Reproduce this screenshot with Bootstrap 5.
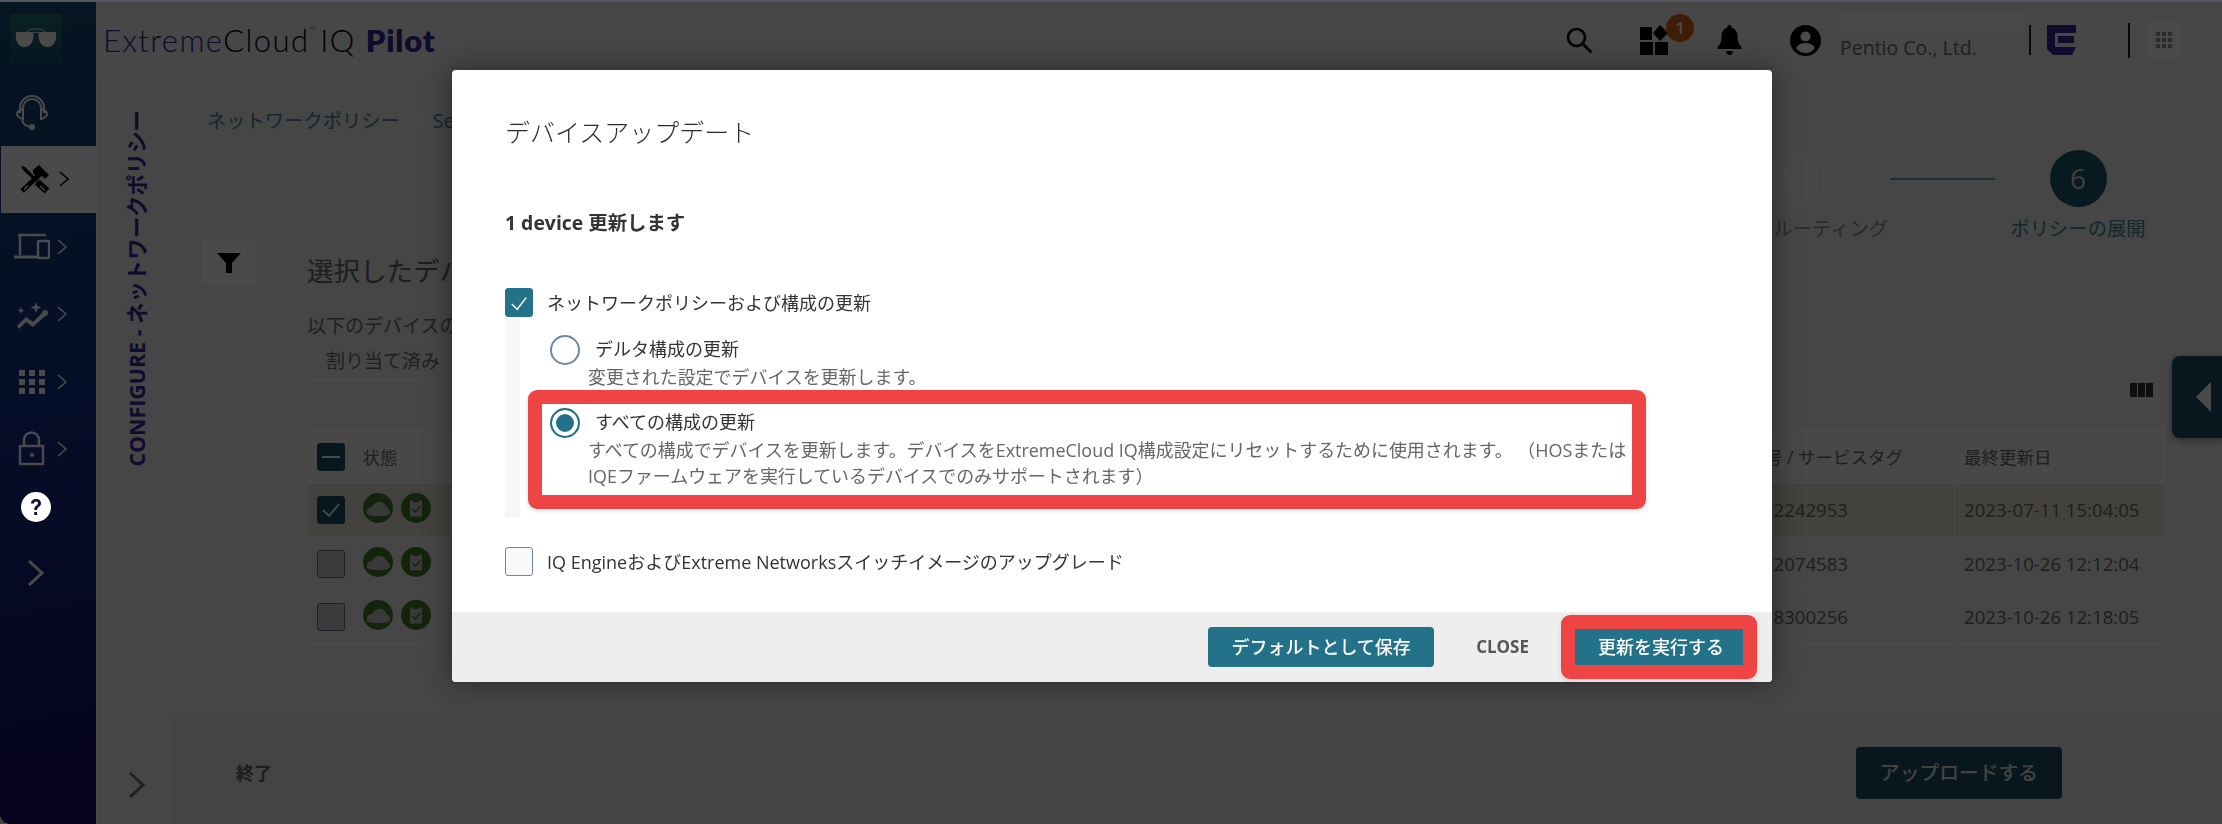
<!DOCTYPE html>
<html lang="ja">
<head>
  <meta charset="UTF-8">
  <title>ExtremeCloud IQ Pilot</title>
  <link rel="stylesheet" href="https://cdn.jsdelivr.net/npm/bootstrap@5.3.3/dist/css/bootstrap.min.css">
  <style>
    body { font-family: "Open Sans", "Noto Sans CJK JP", sans-serif; background: #efefef; color: #6a6a6a; overflow: hidden; }
    .app-shell { height: 100vh; }
    .win-strip { position: absolute; top: 0; left: 0; right: 0; height: 2px; background: #56545f; z-index: 1060; }

    /* left rail */
    .rail { width: 96px; flex: none; background: linear-gradient(168deg, #134a72 0%, #14308a 50%, #160a62 100%); color: #fff; border-bottom-left-radius: 10px; }
    .rail-logo { height: 78px; padding: 14px 0 0 10px; }
    .logo-tile { width: 52px; height: 50px; border-radius: 4px 4px 0 0; background: linear-gradient(180deg, #22766e, #134a72); }
    .rail-item { height: 67.5px; padding-left: 14px; gap: 7px; }
    .rail-item.active-item { margin-left: 1px; background: #fff; color: #000; padding-left: 18px; gap: 9px; }
    .rail-icon { width: 36px; height: 36px; }
    .rail-chev { width: 10px; height: 16px; }
    .help-dot { position: relative; z-index: 1051; width: 30px; height: 30px; margin: 9px 0 0 21px; }
    .rail-expand { margin: 38px 0 0 27px; width: 18px; height: 26px; }

    /* header */
    .top-bar { height: 79px; padding-left: 7px; padding-top: 2px; padding-right: 41px; border-bottom: 1px solid #f7f7f7; background: #f3f3f3; }
    .brand-text { font-family: Lato, sans-serif; font-size: 31px; font-weight: 300; letter-spacing: 1.4px; color: #3a2498; line-height: 1; white-space: nowrap; }
    .brand-text .brand-mid { color: #000; font-weight: 300; }
    .brand-text .brand-iq { color: #000; margin-left: 5px; }
    .brand-text .brand-strong { font-weight: 800; letter-spacing: .8px; margin-left: 10px; }
    .brand-text sup { font-size: 4px; top: -22px; letter-spacing: 0; }
    .badge-holder { position: relative; width: 29px; height: 30px; margin-left: 47px; }
    .count-badge { position: absolute; top: -11px; left: 26px; width: 28px; height: 28px; border-radius: 50%; background: #d8641a; color: #fff; font-size: 17px; font-weight: 600; line-height: 28px; text-align: center; }
    .acct-text { width: 185px; margin-left: 19px; }
    .acct-blur { height: 18px; background: #fdfdfd; margin-top: -6px; }
    .acct-org { font-size: 19.5px; color: #6a6a6a; line-height: 26px; margin-top: 4px; white-space: nowrap; }
    .head-rule { width: 2px; background: #222; }
    .app-btn { width: 35px; height: 36px; margin-left: 16px; border-radius: 4px; background: #fff; }

    /* vertical section tab */
    .side-tab { width: 68px; margin-left: 7px; flex: none; border-left: 1px solid #f6f6f6; border-right: 1px solid #f6f6f6; padding-top: 31px; padding-bottom: 26px; }
    .side-tab-text { writing-mode: vertical-rl; text-orientation: sideways; transform: rotate(180deg); font-size: 21.4px; font-weight: 700; color: #3a2498; line-height: 1; white-space: nowrap; }

    /* work panel */
    .work-panel { padding: 28px 56px 0 31px; min-height: 0; position: relative; }
    .crumbs { margin-left: 5px; font-size: 19.3px; line-height: 28px; color: #3f8a9e; white-space: nowrap; }
    .crumbs .crumb-sep { margin: 0 11px; color: #fff; }
    .stepper { height: 90px; margin-top: 15px; margin-right: 20px; }
    .step-circle { width: 57px; height: 57px; border-radius: 50%; font-size: 28px; line-height: 57px; text-align: center; background: #f9f9f9; color: #fff; }
    .step-circle.on-step { background: #185a6c; color: #d8d8d8; }
    .step-name { font-size: 19.3px; line-height: 28px; margin-top: 8px; color: #8a9094; white-space: nowrap; }
    .step-five { width: 196px; }
    .step-six { width: 136px; margin-left: 15px; }
    .step-six .step-name { color: #3f8a9e; }
    .step-line { width: 105px; height: 2px; background: #7a9aa8; margin: 28px 0 0 2px; }
    .filter-btn { width: 54px; height: 45px; margin-right: 51px; background: #fff; border: 0; }
    .pick-title { font-size: 26.5px; line-height: 36px; margin: 13px 0 0; font-weight: 400; color: #666; }
    .pick-sub { font-size: 19px; line-height: 28px; margin-top: 23px; color: #707070; }
    .pick-chip { height: 39px; margin-top: 2px; padding: 0 18px; font-size: 19px; line-height: 37px; border: 1px solid #fff; border-radius: 4px; color: #707070; width: 400px; }
    .col-bars { height: 14px; margin: 2px 13px 33px 0; }
    .device-table { table-layout: fixed; margin: 0; --bs-table-bg: transparent; border-color: #fff; border: 1px solid #fff; }
    .device-table th, .device-table td { padding: 0 9px; vertical-align: middle; border-color: #fff; color: #6a6a6a; font-weight: 400; white-space: nowrap; }
    .device-table th { height: 53px; font-size: 17.5px; background: #f8f8f8; }
    .device-table td { height: 53.5px; font-size: 18.6px; }
    .device-table tr.picked-row td { background: #e6e2d4; }
    .device-table .serial-col { width: 300px; text-align: right; }
    .device-table .serial-head { padding-right: 51px; }
    .device-table .serial-cell { padding-right: 106px; }
    .device-table .date-col { width: 211px; border-left: 1px solid #fff; }
    .device-table .check-col { width: 46px; }
    .tbl-check { display: block; width: 28px; height: 28px; border-radius: 3px; border: 1.5px solid #6a6c80; background: #ccced4; }
    .tbl-check.check-on { background: #185064; border-color: #185064; }
    .status-wrap { gap: 8px; margin-top: -4px; }
    .drawer-tab { position: absolute; top: 277px; right: 0; width: 50px; height: 82px; background: #185064; border-radius: 8px 0 0 8px; box-shadow: 0 2px 6px rgba(0,0,0,.4); }

    /* action bar */
    .action-bar { height: 107px; flex: none; padding: 30px 160px 0 65px; background: #ebebeb; }
    .finish-text { font-size: 18px; font-weight: 700; color: #666; }
    .upload-btn { width: 206px; height: 52px; padding: 0; font-size: 19.8px; font-weight: 500; background: #185064; border: 0; color: #e4e4e4; border-radius: 4px; opacity: 1; }

    /* dialog */
    .modal-backdrop.show { opacity: .71; }
    .update-dialog { max-width: 1320px; width: 1320px; margin: 70px 0 0 452px; }
    .update-dialog .modal-content { border: 0; border-radius: 4px; box-shadow: 0 0 28px rgba(0,0,0,.45); }
    .update-dialog .modal-body { height: 542px; flex: none; padding: 47px 0 0 53px; color: #333; }
    .dlg-title { font-size: 25px; font-weight: 300; line-height: 30px; margin: 0; color: #2c2c2c; }
    .dlg-count { font-size: 19.4px; font-weight: 700; line-height: 26px; margin: 63px 0 0; color: #333; }
    .opt-head { gap: 14px; font-size: 18px; line-height: 28px; }
    .opt-first { margin-top: 52px; }
    .opt-last { margin-top: 30px; }
    .form-check-input.box-input { width: 28px; height: 29px; margin: 0; flex: none; border: 1.5px solid #6b86a8; border-radius: 3px; background-color: #f8f9fb; }
    .form-check-input.box-input:checked { background-color: #24728a; border-color: #24728a; background-size: 18px 18px; background-image: url("data:image/svg+xml,%3csvg xmlns='http://www.w3.org/2000/svg' viewBox='0 0 20 20'%3e%3cpath fill='none' stroke='%23fff' stroke-width='1.600' d='M2 11l6 6L18 4'/%3e%3c/svg%3e"); }
    .form-check-input.dot-input { width: 30px; height: 30px; margin: 0; flex: none; border: 2px solid #6b86a8; background-color: #fff; }
    .form-check-input.dot-input:checked { background-image: none; background-color: #24728a; border-color: #24728a; box-shadow: inset 0 0 0 4px #fff; }
    .opt-group { border-left: 15px solid #f7f7f7; padding-bottom: 8px; }
    .opt-plain { padding: 18px 0 0 30px; height: 73px; }
    .opt-marked { margin-left: 8px; width: 1118px; height: 119px; padding: 4px 0 0 8px; border: 14px solid #ef4444; border-radius: 9px; box-shadow: 0 2px 5px rgba(0,0,0,.12); }
    .opt-line { gap: 15px; font-size: 18px; line-height: 28px; }
    .opt-line span { margin-top: -3px; }
    .opt-desc { font-size: 17.95px; line-height: 26px; color: #666; margin-top: -1px; padding-left: 38px; white-space: nowrap; }
    .update-dialog .modal-footer { height: 70px; padding: 0 15px 0 0; background: #eee; border: 0; border-radius: 0 0 4px 4px; }
    .update-dialog .modal-footer > * { margin: 0; }
    .teal-btn { background: #24728a; border: 0; color: #fff; font-size: 18px; font-weight: 500; padding: 0; }
    .teal-btn:hover { background: #24728a; color: #fff; }
    .save-btn { width: 226px; height: 40px; border-radius: 4px; }
    .update-dialog .modal-footer .close-btn { margin-left: 42px; padding: 0; border: 0; font-size: 17px; font-weight: 700; color: #555; background: none; }
    .update-dialog .modal-footer .run-mark { margin-left: 32px; border: 14px solid #ef4444; border-radius: 9px; box-shadow: 0 2px 5px rgba(0,0,0,.12); }
    .run-btn { display: block; width: 168px; height: 36px; padding-left: 4px; border-radius: 0; }
  </style>
</head>
<body>
<div class="win-strip"></div>
<div class="app-shell d-flex">

  <nav class="rail d-flex flex-column flex-none">
    <div class="rail-logo">
      <div class="logo-tile d-flex align-items-center justify-content-center">
        <svg width="44" height="22" viewBox="0 0 44 22"><path d="M2 4h15c3 0 3 3 2 7-1 5-4 8-9 8-6 0-9-7-8-15zM42 4H27c-3 0-3 3-2 7 1 5 4 8 9 8 6 0 9-7 8-15z" fill="#fff"/><path d="M17 5c3-1 7-1 10 0M12 4l5-3h10l5 3" stroke="#fff" fill="none"/></svg>
      </div>
    </div>
    <div class="rail-item d-flex align-items-center">
      <svg class="rail-icon" viewBox="0 0 36 36" fill="none" stroke="#fff" stroke-width="2"><path d="M6 19v-5a12 12 0 0 1 24 0v5"/><path d="M9 14a9 9 0 0 1 18 0"/><path d="M9 15v10c-3-1-6-3-6-5s3-4 6-5zM27 15v10c3-1 6-3 6-5s-3-4-6-5z"/><path d="M8 26c1 4 4 6 8 7"/><circle cx="18" cy="33" r="2" fill="#fff"/></svg>
    </div>
    <div class="rail-item active-item d-flex align-items-center">
      <svg width="31" height="31" viewBox="0 0 31 31" fill="none" stroke="#000">
        <path d="M2 2l4 1 13 13-2 2L4 6z" fill="#000" stroke="none"/>
        <path d="M18 18l10 9" stroke-width="7"/>
        <path d="M3 27L20 11" stroke-width="5"/>
        <path d="M14 6l6-5 10 10-4 4-3-3-4 2-5-5z" fill="#000" stroke="none"/>
        <path d="M21 22l5 4.500M5 25.500l4-4" stroke="#fff" stroke-width="1.400"/>
      </svg>
      <svg class="rail-chev" viewBox="0 0 10 16" fill="none" stroke="currentColor" stroke-width="1.6"><path d="M1 1l8 7-8 7"/></svg>
    </div>
    <div class="rail-item d-flex align-items-center">
      <svg class="rail-icon" viewBox="0 0 36 36" fill="none" stroke="#fff" stroke-width="2.4"><path d="M4 6h28M6 6v20"/><path d="M0 28h24" stroke-width="3"/><rect x="24" y="12" width="11" height="17" rx="1"/></svg>
      <svg class="rail-chev" viewBox="0 0 10 16" fill="none" stroke="#fff" stroke-width="1.6"><path d="M1 1l8 7-8 7"/></svg>
    </div>
    <div class="rail-item d-flex align-items-center">
      <svg class="rail-icon" viewBox="0 0 36 36" fill="#fff"><path d="M3 30l9-9 7 5 9-9 3 3-12 11-7-5-7 7z"/><circle cx="31" cy="17" r="3"/><path d="M22 6l1.500 4 4 1.500-4 1.500L22 17l-1.500-4-4-1.500 4-1.500zM7 11l1 2.500 2.500 1-2.500 1L7 18l-1-2.500-2.500-1 2.500-1z"/></svg>
      <svg class="rail-chev" viewBox="0 0 10 16" fill="none" stroke="#fff" stroke-width="1.6"><path d="M1 1l8 7-8 7"/></svg>
    </div>
    <div class="rail-item d-flex align-items-center">
      <svg class="rail-icon" viewBox="0 0 36 36" fill="#fff"><path d="M5 6h6v6H5zM15 6h6v6h-6zM25 6h6v6h-6zM5 15h6v6H5zM15 15h6v6h-6zM25 15h6v6h-6zM5 24h6v6H5zM15 24h6v6h-6zM25 24h6v6h-6z"/></svg>
      <svg class="rail-chev" viewBox="0 0 10 16" fill="none" stroke="#fff" stroke-width="1.6"><path d="M1 1l8 7-8 7"/></svg>
    </div>
    <div class="rail-item d-flex align-items-center">
      <svg class="rail-icon" viewBox="0 0 36 36" fill="none" stroke="#fff" stroke-width="2.4"><rect x="6" y="15" width="23" height="18"/><path d="M10 15V9a7.500 7.500 0 0 1 15 0v6"/><circle cx="18" cy="24" r="2" fill="#fff" stroke="none"/></svg>
      <svg class="rail-chev" viewBox="0 0 10 16" fill="none" stroke="#fff" stroke-width="1.6"><path d="M1 1l8 7-8 7"/></svg>
    </div>
    <svg class="help-dot" viewBox="0 0 30 30"><circle cx="15" cy="15" r="15" fill="#fff"/><path d="M10 11.500c0-3 2.300-4.500 5-4.500s5 1.500 5 4.300c0 3.700-4 3.500-4 6.700h-2.800c0-4.500 3.800-4.500 3.800-6.700 0-1.100-.9-1.700-2-1.700-1.200 0-2 .7-2 2z" fill="#10123a"/><rect x="13.200" y="20" width="2.900" height="3" fill="#10123a"/></svg>
    <svg class="rail-expand" viewBox="0 0 18 26" fill="none" stroke="#fff" stroke-width="3"><path d="M2 1l13 12L2 25"/></svg>
  </nav>

  <div class="flex-grow-1 d-flex flex-column">
    <header class="top-bar d-flex align-items-center flex-none">
      <div class="brand-text">Extreme<span class="brand-mid">Cloud<sup>TM</sup></span><span class="brand-iq">IQ</span><span class="brand-strong">Pilot</span></div>
      <svg class="ms-auto" width="27" height="27" viewBox="0 0 27 27" fill="none" stroke="#000" stroke-width="2.600"><circle cx="10.500" cy="10.500" r="8.500"/><path d="M16.500 16.500l9 9" stroke-width="3"/></svg>
      <div class="badge-holder">
        <svg width="29" height="30" viewBox="0 0 29 30" fill="#000"><path d="M0 2h12v13H0zM0 17h13v13H0zM15 17h13v13H15zM20 0l8 8-8 8-7-8z"/></svg>
        <span class="count-badge">1</span>
      </div>
      <svg class="ms-5" width="25" height="30" viewBox="0 0 25 30" fill="#000"><path d="M12.500 0c1.500 0 2.200 1 2.200 2.500C19 4 20.500 7.500 20.500 12c0 5 1.500 7.500 4 10v2H.5v-2c2.500-2.500 4-5 4-10 0-4.500 1.500-8 5.800-9.500C10.300 1 11 0 12.500 0zM9 26h7c0 2-1.500 4-3.500 4S9 28 9 26z"/></svg>
      <svg class="ms-5" width="31" height="31" viewBox="0 0 31 31"><circle cx="15.500" cy="15.500" r="15.500" fill="#000"/><circle cx="15.500" cy="11.500" r="5" fill="#fff"/><path d="M6 23c2-4 6-5 9.500-5s7.500 1 9.500 5c-2 3-5.500 5-9.500 5S8 26 6 23z" fill="#fff"/></svg>
      <div class="acct-text">
        <div class="acct-blur"></div>
        <div class="acct-org">Pentio Co., Ltd.</div>
      </div>
      <div class="head-rule ms-1" style="height:30px"></div>
      <svg class="ms-3" width="29" height="30" viewBox="0 0 29 30" fill="#3a2498"><path d="M0 0h29v8H8v14h21l-4 8H6l-6-6zM11 11h16v7H11z"/></svg>
      <div class="head-rule" style="height:35px;margin-left:52px"></div>
      <div class="app-btn d-flex align-items-center justify-content-center">
        <svg width="16" height="16" viewBox="0 0 16 16" fill="#999"><path d="M0 0h4v4H0zM6 0h4v4H6zM12 0h4v4h-4zM0 6h4v4H0zM6 6h4v4H6zM12 6h4v4h-4zM0 12h4v4H0zM6 12h4v4H6zM12 12h4v4h-4z"/></svg>
      </div>
    </header>

    <div class="flex-grow-1 d-flex" style="min-height:0">
      <aside class="side-tab d-flex flex-column align-items-center justify-content-between">
        <div class="side-tab-text">CONFIGURE - ネットワークポリシー</div>
        <svg width="16" height="26" viewBox="0 0 16 26" fill="none" stroke="#777" stroke-width="3"><path d="M1 1l13 12L1 25"/></svg>
      </aside>

      <div class="flex-grow-1 d-flex flex-column" style="min-width:0">
        <main class="work-panel flex-grow-1">
          <div class="crumbs">ネットワークポリシー<span class="crumb-sep">&gt;</span>Select</div>

          <div class="stepper d-flex justify-content-end">
            <div class="step-five d-flex flex-column align-items-center">
              <div class="step-circle">5</div>
              <div class="step-name align-self-end">ルーティング</div>
            </div>
            <div class="step-line"></div>
            <div class="step-six d-flex flex-column align-items-center">
              <div class="step-circle on-step">6</div>
              <div class="step-name">ポリシーの展開</div>
            </div>
          </div>

          <div class="d-flex">
            <button class="filter-btn d-flex align-items-center justify-content-center flex-none" type="button">
              <svg width="24" height="20" viewBox="0 0 24 20" fill="#000"><path d="M0 0h24l-9 10v10h-6V10z"/></svg>
            </button>
            <div class="flex-grow-1">
              <h2 class="pick-title">選択したデバイス</h2>
              <div class="pick-sub">以下のデバイスの</div>
              <div class="pick-chip">割り当て済み</div>
              <div class="col-bars d-flex justify-content-end">
                <svg width="23" height="14" viewBox="0 0 23 14" fill="#333"><path d="M0 0h7v14H0zM8 0h7v14H8zM16 0h7v14h-7z"/></svg>
              </div>
            </div>
          </div>

          <table class="table device-table" style="margin-left:105px;width:1859px">
            <thead>
              <tr>
                <th class="check-col"><span class="tbl-check check-on d-flex align-items-center justify-content-center"><svg width="18" height="2"><rect width="18" height="2" fill="#fff"/></svg></span></th>
                <th>状態</th>
                <th class="serial-col serial-head">シリアル番号 / サービスタグ</th>
                <th class="date-col">最終更新日</th>
              </tr>
            </thead>
            <tbody id="device-rows"></tbody>
          </table>

          <div class="drawer-tab d-flex align-items-center ps-4">
            <svg width="15" height="30" viewBox="0 0 15 30" fill="#fff"><path d="M15 0v30L0 15z"/></svg>
          </div>
        </main>

        <footer class="action-bar d-flex justify-content-between align-items-start">
          <div class="finish-text" style="line-height:52px">終了</div>
          <button class="upload-btn" type="button">アップロードする</button>
        </footer>
      </div>
    </div>
  </div>
</div>

<div class="modal-backdrop show"></div>
<div class="modal d-block" tabindex="-1">
  <div class="modal-dialog update-dialog">
    <div class="modal-content">
      <div class="modal-body">
        <h5 class="dlg-title">デバイスアップデート</h5>
        <p class="dlg-count">1 device 更新します</p>

        <label class="opt-head opt-first d-flex align-items-center">
          <input class="form-check-input box-input" type="checkbox" checked>
          <span>ネットワークポリシーおよび構成の更新</span>
        </label>
        <div class="opt-group">
          <div class="opt-plain">
            <label class="opt-line d-flex align-items-center">
              <input class="form-check-input dot-input" type="radio" name="mode">
              <span>デルタ構成の更新</span>
            </label>
            <div class="opt-desc">変更された設定でデバイスを更新します。</div>
          </div>
          <div class="opt-marked">
            <label class="opt-line d-flex align-items-center">
              <input class="form-check-input dot-input" type="radio" name="mode" checked>
              <span>すべての構成の更新</span>
            </label>
            <div class="opt-desc">すべての構成でデバイスを更新します。デバイスをExtremeCloud IQ構成設定にリセットするために使用されます。 （HOSまたは<br>IQEファームウェアを実行しているデバイスでのみサポートされます）</div>
          </div>
        </div>

        <label class="opt-head opt-last d-flex align-items-center">
          <input class="form-check-input box-input" type="checkbox">
          <span>IQ EngineおよびExtreme Networksスイッチイメージのアップグレード</span>
        </label>
      </div>
      <div class="modal-footer">
        <button class="btn teal-btn save-btn" type="button">デフォルトとして保存</button>
        <button class="btn close-btn" type="button">CLOSE</button>
        <div class="run-mark"><button class="btn teal-btn run-btn" type="button">更新を実行する</button></div>
      </div>
    </div>
  </div>
</div>

<script>
const devices = [
  { serial: '2242953', updated: '2023-07-11 15:04:05', picked: true },
  { serial: '2074583', updated: '2023-10-26 12:12:04', picked: false },
  { serial: '8300256', updated: '2023-10-26 12:18:05', picked: false }
];

const cloudIcon = `<svg width="30" height="30" viewBox="0 0 30 30"><circle cx="15" cy="15" r="15" fill="#457a26"/><path d="M4 19c0-3 2-5 5-5 1-3 4-5 7-5 4 0 7 2 8 6 2 0 3 2 3 4v2c-5 3-18 3-23 0z" fill="#c4c4c4"/></svg>`;
const clipIcon = `<svg width="30" height="30" viewBox="0 0 30 30"><circle cx="15" cy="15" r="15" fill="#457a26"/><rect x="8.500" y="7" width="13" height="17" fill="#c4c4c4" stroke="#457a26"/><rect x="12" y="5" width="6" height="4" fill="#457a26"/><path d="M11.500 16l3 3 5-6" fill="none" stroke="#457a26" stroke-width="1.500"/></svg>`;
const tick = `<svg width="20" height="16" viewBox="0 0 20 16" fill="none" stroke="#fff" stroke-width="1.800"><path d="M2 8l6 6L18 2"/></svg>`;

document.getElementById('device-rows').innerHTML = devices.map(d => `
  <tr class="${d.picked ? 'picked-row' : ''}">
    <td class="check-col"><span class="tbl-check d-flex align-items-center justify-content-center ${d.picked ? 'check-on' : ''}">${d.picked ? tick : ''}</span></td>
    <td><div class="status-wrap d-flex">${cloudIcon}${clipIcon}</div></td>
    <td class="serial-col serial-cell">${d.serial}</td>
    <td class="date-col">${d.updated}</td>
  </tr>`).join('');
</script>
<script src="https://cdn.jsdelivr.net/npm/bootstrap@5.3.3/dist/js/bootstrap.bundle.min.js"></script>
</body>
</html>
